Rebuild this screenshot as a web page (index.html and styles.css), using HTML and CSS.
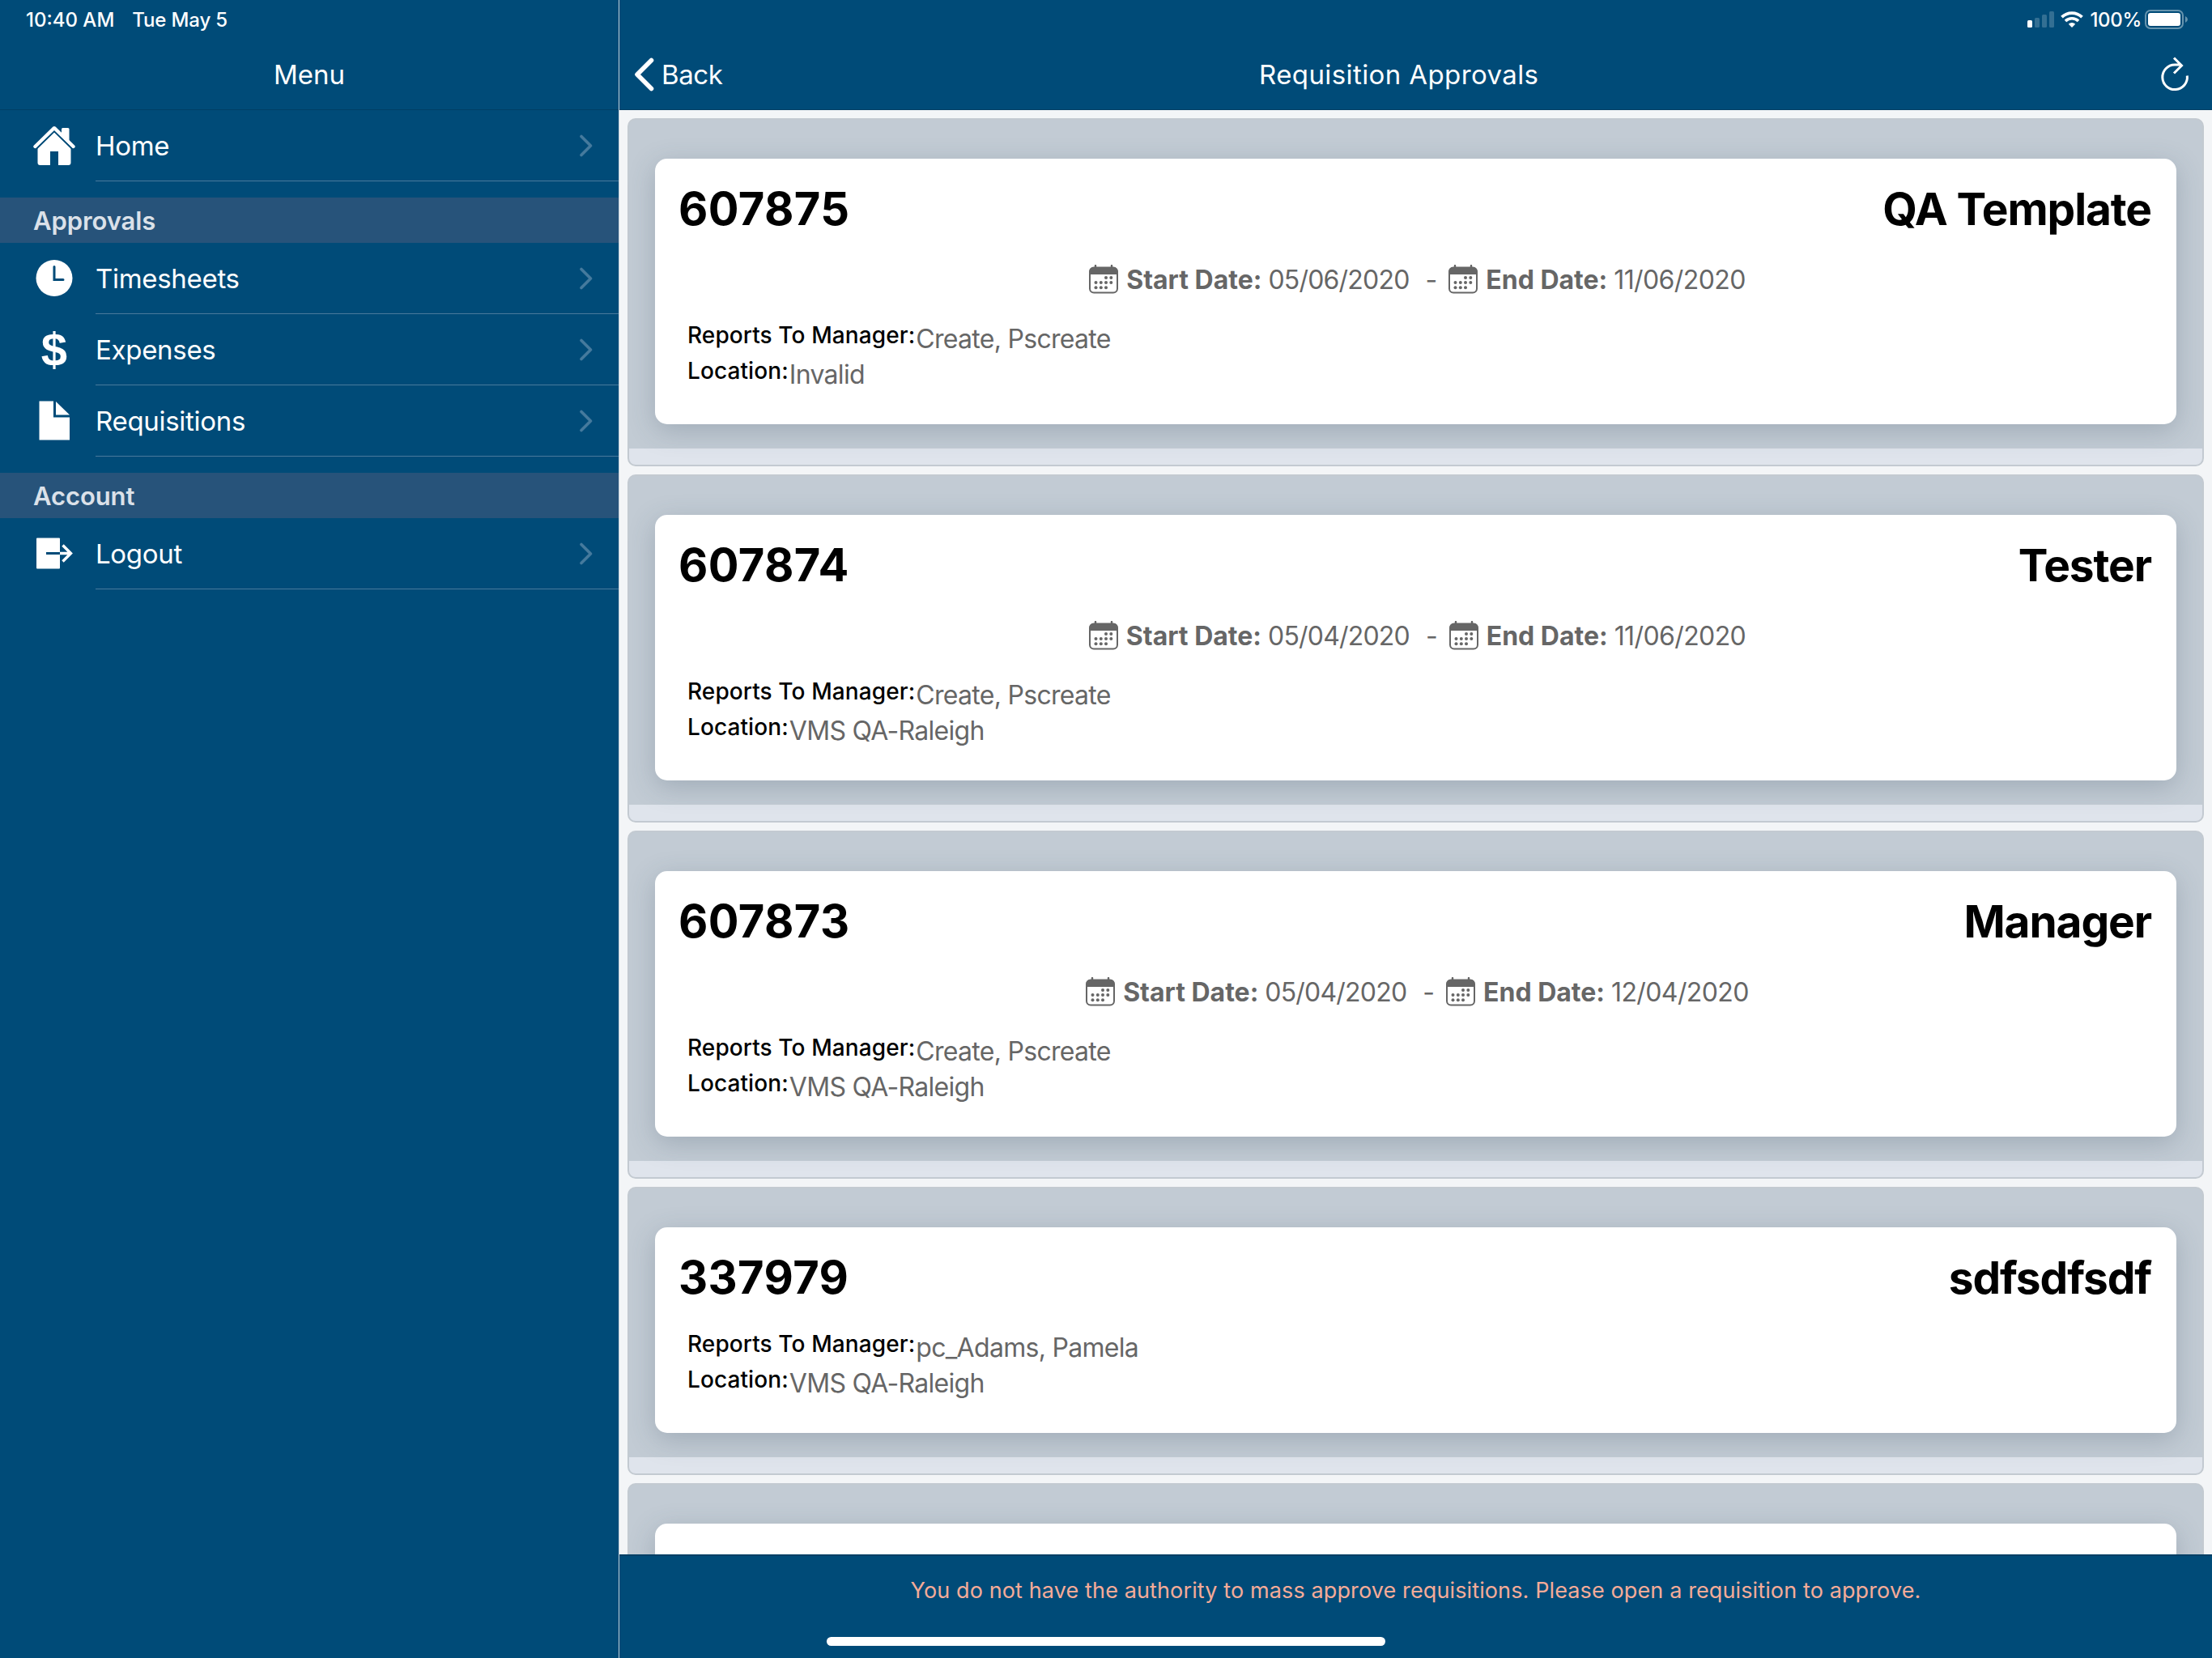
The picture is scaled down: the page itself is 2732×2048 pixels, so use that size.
FILE: index.html
```
<!DOCTYPE html>
<html lang="en">
<head>
    <meta charset="UTF-8">
    <meta name="viewport" content="width=device-width, initial-scale=1.0">
    <title>Requisition Approvals</title>
    <link rel="stylesheet" href="styles.css">
</head>
<body>
    <!-- shared icons -->
    <svg class="sprite" width="0" height="0">
        <symbol id="chevron" viewBox="0 0 16 28">
            <path d="M2 2.5 L13.5 14 L2 25.5" fill="none" stroke="currentColor" stroke-width="3.6" stroke-linecap="round" stroke-linejoin="round"/>
        </symbol>
        <symbol id="calendar" viewBox="0 0 36 36">
            <path d="M8 1v5M28 1v5" stroke="currentColor" stroke-width="2.4" stroke-linecap="round"/>
            <rect x="1" y="3.5" width="34" height="31" rx="5" fill="none" stroke="currentColor" stroke-width="2"/>
            <path d="M0.5 12V8a5 5 0 0 1 5-5h25a5 5 0 0 1 5 5v4h-2H2.5z" fill="currentColor"/>
            <g fill="currentColor">
                <circle cx="21" cy="16" r="2"/><circle cx="27.3" cy="16" r="2"/>
                <circle cx="8.5" cy="22" r="2"/><circle cx="14.8" cy="22" r="2"/><circle cx="21" cy="22" r="2"/><circle cx="27.3" cy="22" r="2"/>
                <circle cx="8.5" cy="28.3" r="2"/><circle cx="14.8" cy="28.3" r="2"/><circle cx="21" cy="28.3" r="2"/>
            </g>
        </symbol>
    </svg>

    <div class="app">
        <div class="sidebar">
            <div class="header">
                <div class="status"><span class="time">10:40 AM</span><span class="date">Tue May 5</span></div>
                <div class="navbar center"><span class="nav-title">Menu</span></div>
            </div>

            <div class="menu-item">
                <svg class="menu-icon" viewBox="0 0 52 52">
                    <path d="M35 11V5.5q0-1.5 1.5-1.5h6.5q1.5 0 1.5 1.5V20z" fill="#fff"/>
                    <path d="M2.5 27 L26 4.2 L49.5 27" fill="none" stroke="#fff" stroke-width="4.4" stroke-linecap="round" stroke-linejoin="round"/>
                    <path d="M26 9 L46.5 29V47q0 3-3 3H31V33H21V50H8.5q-3 0-3-3V29z" fill="#fff"/>
                    <path d="M4.500 29.300 L26 8.400 L47.500 29.300" fill="none" stroke="#004b78" stroke-width="1.8"/>
                </svg>
                <div class="menu-body"><span class="menu-label">Home</span><svg class="chevron"><use href="#chevron"/></svg></div>
            </div>

            <div class="menu-group">Approvals</div>
            <div class="menu-item">
                <svg class="menu-icon" viewBox="0 0 52 52">
                    <circle cx="26" cy="25.5" r="22.5" fill="#fff"/>
                    <path d="M26 11.5v16h11" fill="none" stroke="#004b78" stroke-width="3" stroke-linecap="round"/>
                </svg>
                <div class="menu-body"><span class="menu-label">Timesheets</span><svg class="chevron"><use href="#chevron"/></svg></div>
            </div>
            <div class="menu-item">
                <span class="menu-icon dollar">$</span>
                <div class="menu-body"><span class="menu-label">Expenses</span><svg class="chevron"><use href="#chevron"/></svg></div>
            </div>
            <div class="menu-item">
                <svg class="menu-icon" viewBox="0 0 52 52">
                    <path d="M7.500 1.500H25V21.500H45V49.500H7.500z" fill="#fff"/>
                    <path d="M28 2V18.500H45z" fill="#fff"/>
                </svg>
                <div class="menu-body"><span class="menu-label">Requisitions</span><svg class="chevron"><use href="#chevron"/></svg></div>
            </div>

            <div class="menu-group">Account</div>
            <div class="menu-item">
                <svg class="menu-icon" viewBox="0 0 52 52">
                    <rect x="4" y="6.5" width="29" height="38" rx="1" fill="#fff"/>
                    <path d="M16 25.500H33" stroke="#004b78" stroke-width="3"/>
                    <path d="M33 25.500H47M36.500 15.500L46.500 25.500L36.500 35.500" fill="none" stroke="#fff" stroke-width="3.4"/>
                </svg>
                <div class="menu-body"><span class="menu-label">Logout</span><svg class="chevron"><use href="#chevron"/></svg></div>
            </div>
        </div>

        <div class="main">
            <div class="header">
                <div class="status status-right">
                    <svg width="33" height="20" viewBox="0 0 33 20">
                        <rect x="0" y="11" width="6" height="9" rx="1.5" fill="#fff"/>
                        <rect x="9" y="8" width="6" height="12" rx="1.5" fill="#336f93"/>
                        <rect x="18" y="4" width="6" height="16" rx="1.5" fill="#336f93"/>
                        <rect x="27" y="0" width="6" height="20" rx="1.5" fill="#336f93"/>
                    </svg>
                    <svg class="wifi" width="28" height="20" viewBox="0 0 28 20">
                        <path d="M1.5 7.2a18 18 0 0 1 25 0" fill="none" stroke="#fff" stroke-width="3.8"/>
                        <path d="M6 12a11.5 11.5 0 0 1 16 0" fill="none" stroke="#fff" stroke-width="3.6"/>
                        <path d="M9.8 15.8a6 6 0 0 1 8.4 0L14 20z" fill="#fff"/>
                    </svg>
                    <span class="percent">100%</span>
                    <svg width="54" height="24" viewBox="0 0 54 24">
                        <rect x="1" y="1" width="46" height="22" rx="6" fill="none" stroke="#6694ae" stroke-width="2"/>
                        <rect x="4" y="4" width="40" height="16" rx="3" fill="#fff"/>
                        <path d="M50 8q3 1.5 3 4t-3 4z" fill="#6694ae"/>
                    </svg>
                </div>
                <div class="navbar">
                    <svg class="back-icon" width="25" height="42" viewBox="0 0 25 42"><path d="M21.5 3.5L4 21L21.5 38.5" fill="none" stroke="#fff" stroke-width="5.6" stroke-linecap="round" stroke-linejoin="round"/></svg>
                    <span class="back-label">Back</span>
                    <span class="nav-title main-title">Requisition Approvals</span>
                    <svg class="refresh" width="36" height="44" viewBox="0 0 36 44"><path d="M33.3 23.5A15.3 15.3 0 1 1 18 10H26M17 1.5L26.5 11L17 20.5" fill="none" stroke="#fff" stroke-width="3"/></svg>
                </div>
            </div>

            <div class="list">
                <div class="item">
                    <div class="card">
                        <div class="card-title"><span>607875</span><span class="name">QA Template</span></div>
                        <div class="dates">
                            <svg class="calendar"><use href="#calendar"/></svg><b>Start Date:</b><span class="day">05/06/2020</span><span class="dash">-</span>
                            <svg class="calendar"><use href="#calendar"/></svg><b>End Date:</b><span class="day end">11/06/2020</span>
                        </div>
                        <div class="field"><span class="label">Reports To Manager:</span><span class="value">Create, Pscreate</span></div>
                        <div class="field"><span class="label">Location:</span><span class="value">Invalid</span></div>
                    </div>
                </div>
                <div class="item">
                    <div class="card">
                        <div class="card-title"><span>607874</span><span class="name">Tester</span></div>
                        <div class="dates">
                            <svg class="calendar"><use href="#calendar"/></svg><b>Start Date:</b><span class="day">05/04/2020</span><span class="dash">-</span>
                            <svg class="calendar"><use href="#calendar"/></svg><b>End Date:</b><span class="day end">11/06/2020</span>
                        </div>
                        <div class="field"><span class="label">Reports To Manager:</span><span class="value">Create, Pscreate</span></div>
                        <div class="field"><span class="label">Location:</span><span class="value">VMS QA-Raleigh</span></div>
                    </div>
                </div>
                <div class="item">
                    <div class="card">
                        <div class="card-title"><span>607873</span><span class="name">Manager</span></div>
                        <div class="dates">
                            <svg class="calendar"><use href="#calendar"/></svg><b>Start Date:</b><span class="day">05/04/2020</span><span class="dash">-</span>
                            <svg class="calendar"><use href="#calendar"/></svg><b>End Date:</b><span class="day end">12/04/2020</span>
                        </div>
                        <div class="field"><span class="label">Reports To Manager:</span><span class="value">Create, Pscreate</span></div>
                        <div class="field"><span class="label">Location:</span><span class="value">VMS QA-Raleigh</span></div>
                    </div>
                </div>
                <div class="item">
                    <div class="card">
                        <div class="card-title"><span>337979</span><span class="name">sdfsdfsdf</span></div>
                        <div class="field"><span class="label">Reports To Manager:</span><span class="value">pc_Adams, Pamela</span></div>
                        <div class="field"><span class="label">Location:</span><span class="value">VMS QA-Raleigh</span></div>
                    </div>
                </div>
                <div class="item">
                    <div class="card next"></div>
                </div>
            </div>

            <div class="footer">
                <span class="message">You do not have the authority to mass approve requisitions. Please open a requisition to approve.</span>
            </div>
        </div>
        <div class="home-bar"></div>
    </div>
</body>
</html>
```

FILE: styles.css
```
* {
    box-sizing: border-box;
}

body {
    margin: 0;
    font-family: Inter, "Liberation Sans", sans-serif;
    background-color: #004b78;
}

.sprite {
    display: none;
}

.app {
    position: relative;
    display: flex;
    width: 2732px;
    height: 2048px;
    overflow: hidden;
}

.sidebar {
    width: 765px;
    flex: none;
    border-right: 1px solid #c3d0da;
    background-color: #004b78;
    color: #fff;
}

.main {
    flex: 1;
    display: flex;
    flex-direction: column;
    background-color: #f3f5f7;
    min-width: 0;
}

.header {
    height: 136px;
    flex: none;
    background-color: #004b78;
    border-bottom: 1px solid #003f65;
    color: #fff;
}

.status {
    height: 48px;
    display: flex;
    align-items: center;
    padding-left: 32px;
    font-size: 24px;
    font-weight: 500;
}

.date {
    margin-left: 22px;
    letter-spacing: -0.15px;
}

.status-right {
    justify-content: flex-end;
    padding-right: 29px;
}

.wifi {
    margin: 0 8px 0 8px;
}

.percent {
    margin-right: 4px;
    letter-spacing: -0.3px;
}

.navbar {
    height: 87px;
    display: flex;
    align-items: center;
    padding: 0 28px 0 18px;
    font-size: 33px;
}

.navbar.center {
    justify-content: center;
    padding-right: 18px;
}

.back-label {
    margin-left: 9px;
    letter-spacing: -0.4px;
}

.main-title {
    flex: 1;
    padding-right: 105px;
    text-align: center;
    letter-spacing: 0.4px;
}

.menu-item {
    height: 88px;
    display: flex;
    align-items: center;
    padding-left: 41px;
}

.menu-icon {
    width: 52px;
    height: 52px;
    flex: none;
}

.dollar {
    font: bold 58px/52px "Liberation Sans", sans-serif;
    text-align: center;
}

.menu-body {
    flex: 1;
    height: 88px;
    margin-left: 25px;
    padding-right: 32px;
    display: flex;
    align-items: center;
    justify-content: space-between;
    border-bottom: 1px solid #4a7a9c;
    font-size: 33px;
    letter-spacing: -0.3px;
}

.chevron {
    width: 16px;
    height: 28px;
    color: #457a9d;
}

.menu-group {
    height: 56px;
    margin-top: 20px;
    padding-left: 41px;
    background-color: #27537a;
    color: #dbe1e9;
    font-size: 31px;
    font-weight: 600;
    line-height: 58px;
    letter-spacing: -0.1px;
}

.list {
    flex: 1;
    overflow: hidden;
    padding: 10px;
}

.item {
    margin-bottom: 10px;
    padding: 48px 32px 50px;
    border: 2px solid #c3cad1;
    border-radius: 10px;
    background: linear-gradient(#dfe4ec, #dfe4ec) bottom / 100% 20px no-repeat, #c2cbd4;
}

.card {
    padding: 28px 32px 39px 40px;
    border-radius: 15px;
    background-color: #fff;
    box-shadow: 0 8px 32px rgba(60, 80, 100, 0.25);
}

.card.next {
    height: 328px;
}

.card-title {
    height: 99px;
    margin-left: -11px;
    display: flex;
    justify-content: space-between;
    align-items: flex-start;
    font-size: 56px;
    line-height: 69px;
    font-weight: 700;
    color: #000;
    letter-spacing: 0.4px;
}

.name {
    font-size: 55px;
    letter-spacing: -1.1px;
    margin-right: -1px;
}

.dates {
    height: 44px;
    margin-bottom: 30px;
    padding-right: 4px;
    display: flex;
    align-items: center;
    justify-content: center;
    font-size: 32px;
    color: #666;
}

.calendar {
    width: 36px;
    height: 36px;
    margin-right: 10px;
}

.day {
    margin-left: 8px;
    letter-spacing: -0.8px;
}

.day.end {
    letter-spacing: -0.6px;
}

.dash {
    margin: 0 14px 0 20px;
}

.field {
    height: 44px;
    display: flex;
}

.label {
    font-size: 28px;
    font-weight: 500;
    color: #000;
    letter-spacing: 0.1px;
}

.value {
    margin: 2px 0 0 1px;
    font-size: 32px;
    color: #666;
    letter-spacing: -0.7px;
}

.footer {
    height: 128px;
    flex: none;
    padding-top: 26px;
    border-top: 2px solid #003f65;
    background-color: #004b78;
    text-align: center;
    font-size: 27px;
    letter-spacing: 0.12px;
    color: #f5ab98;
}

.home-bar {
    position: absolute;
    left: 1021px;
    top: 2022px;
    width: 690px;
    height: 11px;
    border-radius: 6px;
    background-color: #fff;
}
```
